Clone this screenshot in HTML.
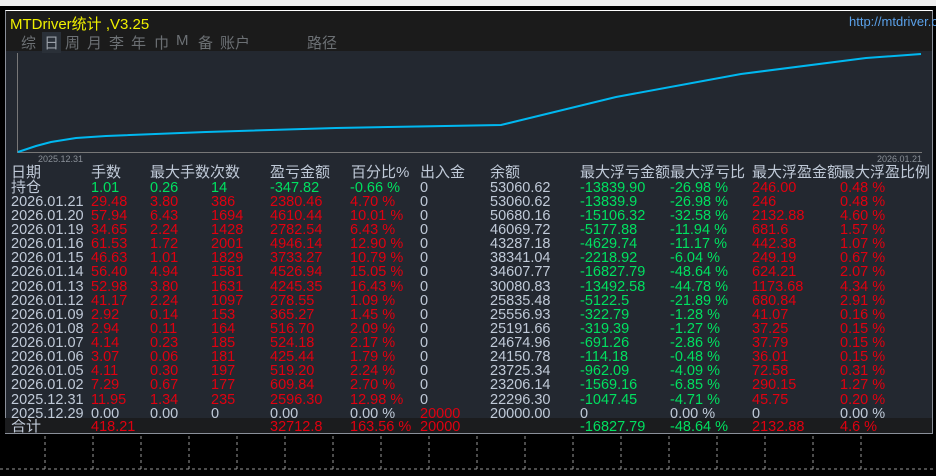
<!DOCTYPE html><html><head><meta charset="utf-8"><style>
*{margin:0;padding:0;box-sizing:border-box}
body{width:936px;height:476px;background:#000;position:relative;overflow:hidden;font-family:"Liberation Sans","Noto Sans CJK SC",sans-serif}
.top{position:absolute;left:0;top:0;width:936px;height:6px;background:#efefef}
.panel{position:absolute;left:5px;top:10px;width:928px;height:424px;background:#232830;border:1px solid #8a8f99;border-top:1px solid #fff}
.title{position:absolute;left:0;top:0;width:100%;height:40px;background:#1b1b1b}
.r{position:absolute;left:0;width:936px;height:14px;font-size:14.5px;line-height:14px;white-space:nowrap}
.r span{position:absolute;top:0}
.g{color:#00e060}.d{color:#e00010}.b{color:#c0cad8}
.tot{position:absolute;left:5px;top:418px;width:927px;height:15px;background:#1b1c1e}
.tab{position:absolute;top:21px;color:#6c7074;font-size:15px}
</style></head><body>
<div class="top"></div>
<div class="panel">
<div class="title">
<div style="position:absolute;left:4px;top:2px;color:#f0f000;font-size:15px">MTDriver统计 ,V3.25</div>
<div style="position:absolute;left:843px;top:3px;color:#5aa0e8;font-size:13px">http://mtdriver.c</div>
<div class="tab" style="left:15px">综</div>
<div class="tab" style="left:36px;background:#2a3038;color:#9aa0a8;padding:0 2px">日</div>
<div class="tab" style="left:59px">周</div>
<div class="tab" style="left:81px">月</div>
<div class="tab" style="left:103px">李</div>
<div class="tab" style="left:125px">年</div>
<div class="tab" style="left:148px">巾</div>
<div class="tab" style="left:170px">M</div>
<div class="tab" style="left:192px">备</div>
<div class="tab" style="left:214px">账户</div>
<div class="tab" style="left:301px">路径</div>
</div>
<div style="position:absolute;left:11px;top:42px;width:1px;height:99px;background:#777"></div>
<div style="position:absolute;left:11px;top:141px;width:905px;height:1px;background:#777"></div>
<svg style="position:absolute;left:0;top:0" width="928" height="160"><polyline fill="none" stroke="#00b8f0" stroke-width="2" points="12,141 30,135 45,131 70,127 100,125 200,121 330,117 495,114 610,86 735,63 860,47 915,43"/></svg>
<div style="position:absolute;left:32px;top:143px;color:#8a9098;font-size:9px">2025.12.31</div>
<div style="position:absolute;left:871px;top:143px;color:#8a9098;font-size:9px">2026.01.21</div>
</div>
<div class="tot"></div>
<div class="r b" style="top:165px;font-size:15px;line-height:16px;height:16px"><span style="left:11px">日期</span><span style="left:91px">手数</span><span style="left:150px">最大手数次数</span><span style="left:270px">盈亏金额</span><span style="left:351px">百分比%</span><span style="left:420px">出入金</span><span style="left:490px">余额</span><span style="left:580px">最大浮亏金额</span><span style="left:670px">最大浮亏比</span><span style="left:752px">最大浮盈金额</span><span style="left:840px">最大浮盈比例</span></div>
<div class="r" style="top:181px"><span class="b" style="left:11px;font-size:15px">持仓</span><span class="g" style="left:91px">1.01</span><span class="g" style="left:150px">0.26</span><span class="g" style="left:211px">14</span><span class="g" style="left:270px">-347.82</span><span class="g" style="left:350px">-0.66 %</span><span class="b" style="left:420px">0</span><span class="b" style="left:490px">53060.62</span><span class="g" style="left:580px">-13839.90</span><span class="g" style="left:670px">-26.98 %</span><span class="d" style="left:752px">246.00</span><span class="d" style="left:840px">0.48 %</span></div>
<div class="r" style="top:195px"><span class="b" style="left:11px">2026.01.21</span><span class="d" style="left:91px">29.48</span><span class="d" style="left:150px">3.80</span><span class="d" style="left:211px">386</span><span class="d" style="left:270px">2380.46</span><span class="d" style="left:350px">4.70 %</span><span class="b" style="left:420px">0</span><span class="b" style="left:490px">53060.62</span><span class="g" style="left:580px">-13839.9</span><span class="g" style="left:670px">-26.98 %</span><span class="d" style="left:752px">246</span><span class="d" style="left:840px">0.48 %</span></div>
<div class="r" style="top:209px"><span class="b" style="left:11px">2026.01.20</span><span class="d" style="left:91px">57.94</span><span class="d" style="left:150px">6.43</span><span class="d" style="left:211px">1694</span><span class="d" style="left:270px">4610.44</span><span class="d" style="left:350px">10.01 %</span><span class="b" style="left:420px">0</span><span class="b" style="left:490px">50680.16</span><span class="g" style="left:580px">-15106.32</span><span class="g" style="left:670px">-32.58 %</span><span class="d" style="left:752px">2132.88</span><span class="d" style="left:840px">4.60 %</span></div>
<div class="r" style="top:223px"><span class="b" style="left:11px">2026.01.19</span><span class="d" style="left:91px">34.65</span><span class="d" style="left:150px">2.24</span><span class="d" style="left:211px">1428</span><span class="d" style="left:270px">2782.54</span><span class="d" style="left:350px">6.43 %</span><span class="b" style="left:420px">0</span><span class="b" style="left:490px">46069.72</span><span class="g" style="left:580px">-5177.88</span><span class="g" style="left:670px">-11.94 %</span><span class="d" style="left:752px">681.6</span><span class="d" style="left:840px">1.57 %</span></div>
<div class="r" style="top:237px"><span class="b" style="left:11px">2026.01.16</span><span class="d" style="left:91px">61.53</span><span class="d" style="left:150px">1.72</span><span class="d" style="left:211px">2001</span><span class="d" style="left:270px">4946.14</span><span class="d" style="left:350px">12.90 %</span><span class="b" style="left:420px">0</span><span class="b" style="left:490px">43287.18</span><span class="g" style="left:580px">-4629.74</span><span class="g" style="left:670px">-11.17 %</span><span class="d" style="left:752px">442.38</span><span class="d" style="left:840px">1.07 %</span></div>
<div class="r" style="top:251px"><span class="b" style="left:11px">2026.01.15</span><span class="d" style="left:91px">46.63</span><span class="d" style="left:150px">1.01</span><span class="d" style="left:211px">1829</span><span class="d" style="left:270px">3733.27</span><span class="d" style="left:350px">10.79 %</span><span class="b" style="left:420px">0</span><span class="b" style="left:490px">38341.04</span><span class="g" style="left:580px">-2218.92</span><span class="g" style="left:670px">-6.04 %</span><span class="d" style="left:752px">249.19</span><span class="d" style="left:840px">0.67 %</span></div>
<div class="r" style="top:265px"><span class="b" style="left:11px">2026.01.14</span><span class="d" style="left:91px">56.40</span><span class="d" style="left:150px">4.94</span><span class="d" style="left:211px">1581</span><span class="d" style="left:270px">4526.94</span><span class="d" style="left:350px">15.05 %</span><span class="b" style="left:420px">0</span><span class="b" style="left:490px">34607.77</span><span class="g" style="left:580px">-16827.79</span><span class="g" style="left:670px">-48.64 %</span><span class="d" style="left:752px">624.21</span><span class="d" style="left:840px">2.07 %</span></div>
<div class="r" style="top:280px"><span class="b" style="left:11px">2026.01.13</span><span class="d" style="left:91px">52.98</span><span class="d" style="left:150px">3.80</span><span class="d" style="left:211px">1631</span><span class="d" style="left:270px">4245.35</span><span class="d" style="left:350px">16.43 %</span><span class="b" style="left:420px">0</span><span class="b" style="left:490px">30080.83</span><span class="g" style="left:580px">-13492.58</span><span class="g" style="left:670px">-44.78 %</span><span class="d" style="left:752px">1173.68</span><span class="d" style="left:840px">4.34 %</span></div>
<div class="r" style="top:294px"><span class="b" style="left:11px">2026.01.12</span><span class="d" style="left:91px">41.17</span><span class="d" style="left:150px">2.24</span><span class="d" style="left:211px">1097</span><span class="d" style="left:270px">278.55</span><span class="d" style="left:350px">1.09 %</span><span class="b" style="left:420px">0</span><span class="b" style="left:490px">25835.48</span><span class="g" style="left:580px">-5122.5</span><span class="g" style="left:670px">-21.89 %</span><span class="d" style="left:752px">680.84</span><span class="d" style="left:840px">2.91 %</span></div>
<div class="r" style="top:308px"><span class="b" style="left:11px">2026.01.09</span><span class="d" style="left:91px">2.92</span><span class="d" style="left:150px">0.14</span><span class="d" style="left:211px">153</span><span class="d" style="left:270px">365.27</span><span class="d" style="left:350px">1.45 %</span><span class="b" style="left:420px">0</span><span class="b" style="left:490px">25556.93</span><span class="g" style="left:580px">-322.79</span><span class="g" style="left:670px">-1.28 %</span><span class="d" style="left:752px">41.07</span><span class="d" style="left:840px">0.16 %</span></div>
<div class="r" style="top:322px"><span class="b" style="left:11px">2026.01.08</span><span class="d" style="left:91px">2.94</span><span class="d" style="left:150px">0.11</span><span class="d" style="left:211px">164</span><span class="d" style="left:270px">516.70</span><span class="d" style="left:350px">2.09 %</span><span class="b" style="left:420px">0</span><span class="b" style="left:490px">25191.66</span><span class="g" style="left:580px">-319.39</span><span class="g" style="left:670px">-1.27 %</span><span class="d" style="left:752px">37.25</span><span class="d" style="left:840px">0.15 %</span></div>
<div class="r" style="top:336px"><span class="b" style="left:11px">2026.01.07</span><span class="d" style="left:91px">4.14</span><span class="d" style="left:150px">0.23</span><span class="d" style="left:211px">185</span><span class="d" style="left:270px">524.18</span><span class="d" style="left:350px">2.17 %</span><span class="b" style="left:420px">0</span><span class="b" style="left:490px">24674.96</span><span class="g" style="left:580px">-691.26</span><span class="g" style="left:670px">-2.86 %</span><span class="d" style="left:752px">37.79</span><span class="d" style="left:840px">0.15 %</span></div>
<div class="r" style="top:350px"><span class="b" style="left:11px">2026.01.06</span><span class="d" style="left:91px">3.07</span><span class="d" style="left:150px">0.06</span><span class="d" style="left:211px">181</span><span class="d" style="left:270px">425.44</span><span class="d" style="left:350px">1.79 %</span><span class="b" style="left:420px">0</span><span class="b" style="left:490px">24150.78</span><span class="g" style="left:580px">-114.18</span><span class="g" style="left:670px">-0.48 %</span><span class="d" style="left:752px">36.01</span><span class="d" style="left:840px">0.15 %</span></div>
<div class="r" style="top:364px"><span class="b" style="left:11px">2026.01.05</span><span class="d" style="left:91px">4.11</span><span class="d" style="left:150px">0.30</span><span class="d" style="left:211px">197</span><span class="d" style="left:270px">519.20</span><span class="d" style="left:350px">2.24 %</span><span class="b" style="left:420px">0</span><span class="b" style="left:490px">23725.34</span><span class="g" style="left:580px">-962.09</span><span class="g" style="left:670px">-4.09 %</span><span class="d" style="left:752px">72.58</span><span class="d" style="left:840px">0.31 %</span></div>
<div class="r" style="top:378px"><span class="b" style="left:11px">2026.01.02</span><span class="d" style="left:91px">7.29</span><span class="d" style="left:150px">0.67</span><span class="d" style="left:211px">177</span><span class="d" style="left:270px">609.84</span><span class="d" style="left:350px">2.70 %</span><span class="b" style="left:420px">0</span><span class="b" style="left:490px">23206.14</span><span class="g" style="left:580px">-1569.16</span><span class="g" style="left:670px">-6.85 %</span><span class="d" style="left:752px">290.15</span><span class="d" style="left:840px">1.27 %</span></div>
<div class="r" style="top:393px"><span class="b" style="left:11px">2025.12.31</span><span class="d" style="left:91px">11.95</span><span class="d" style="left:150px">1.34</span><span class="d" style="left:211px">235</span><span class="d" style="left:270px">2596.30</span><span class="d" style="left:350px">12.98 %</span><span class="b" style="left:420px">0</span><span class="b" style="left:490px">22296.30</span><span class="g" style="left:580px">-1047.45</span><span class="g" style="left:670px">-4.71 %</span><span class="d" style="left:752px">45.75</span><span class="d" style="left:840px">0.20 %</span></div>
<div class="r b" style="top:407px"><span style="left:11px">2025.12.29</span><span style="left:91px">0.00</span><span style="left:150px">0.00</span><span style="left:211px">0</span><span style="left:270px">0.00</span><span style="left:350px">0.00 %</span><span class="d" style="left:420px">20000</span><span style="left:490px">20000.00</span><span style="left:580px">0</span><span style="left:670px">0.00 %</span><span style="left:752px">0</span><span style="left:840px">0.00 %</span></div>
<svg style="position:absolute;left:0;top:433px" width="936" height="43"><rect x="0" y="0" width="936" height="43" fill="#000"/><g stroke="#999" stroke-dasharray="3,3"><line x1="5" y1="0.5" x2="933" y2="0.5" stroke="#8a8f99" stroke-dasharray="none"/><line x1="0" y1="36" x2="936" y2="36"/><path d="M45 3V36M93 3V36M141 3V36M189 3V36M237 3V36M285 3V36M333 3V36M381 3V36M429 3V36M477 3V36M525 3V36M573 3V36M621 3V36M669 3V36M717 3V36M765 3V36M813 3V36M861 3V36"/></g></svg>
<div class="r" style="top:419px;height:14px;overflow:hidden"><span class="b" style="left:11px;top:1px;font-size:15px">合计</span><span class="d" style="left:91px;top:1px">418.21</span><span class="d" style="left:270px;top:1px">32712.8</span><span class="d" style="left:350px;top:1px">163.56 %</span><span class="d" style="left:420px;top:1px">20000</span><span class="g" style="left:580px;top:1px">-16827.79</span><span class="g" style="left:670px;top:1px">-48.64 %</span><span class="d" style="left:752px;top:1px">2132.88</span><span class="d" style="left:840px;top:1px">4.6 %</span></div>
</body></html>
